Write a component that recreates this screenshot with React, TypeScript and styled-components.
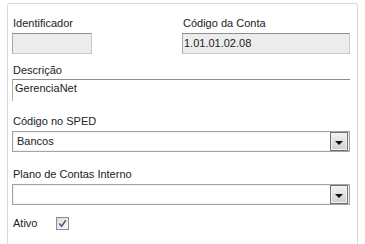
import * as React from 'react';
import styled, { createGlobalStyle } from 'styled-components';

const GlobalStyle = createGlobalStyle`
  body {
    margin: 0;
    background: #ffffff;
    font-family: 'Liberation Sans', Arial, sans-serif;
  }
`;

const App: React.FC = () => {
  return (
    <>
      <GlobalStyle />
      <Panel>
        <TopRow>
          <Field>
            <Label>Identificador</Label>
            <ReadOnlyBox width="80px" />
          </Field>
          <Field>
            <Label>Código da Conta</Label>
            <ReadOnlyBox>1.01.01.02.08</ReadOnlyBox>
          </Field>
        </TopRow>

        <Field spacing={10}>
          <Label>Descrição</Label>
          <TextBox>GerenciaNet</TextBox>
        </Field>

        <Field spacing={14}>
          <Label>Código no SPED</Label>
          <Select>
            <SelectValue>Bancos</SelectValue>
            <DropButton>
              <Arrow />
            </DropButton>
          </Select>
        </Field>

        <Field spacing={16}>
          <Label>Plano de Contas Interno</Label>
          <Select>
            <SelectValue />
            <DropButton>
              <Arrow />
            </DropButton>
          </Select>
        </Field>

        <CheckRow>
          <span>Ativo</span>
          <Check>
            <svg width="9" height="9" viewBox="0 0 9 9">
              <path d="M1.2 4.6 L3.6 7.3 L7.8 1.2" fill="none" stroke="#4a5a8c" strokeWidth="1.5" />
            </svg>
          </Check>
        </CheckRow>
      </Panel>
    </>
  );
};

const Panel = styled.div`
  box-sizing: border-box;
  margin: 3px 0 0 7px;
  width: 351px;
  height: 241px;
  padding: 13px 7px 0 4px;
  border: 1px solid #d9d9d9;
  border-bottom: none;
  border-radius: 3px 3px 0 0;
  background: #ffffff;
  color: #222222;
  font-size: 11px;
`;

const TopRow = styled.div`
  display: grid;
  grid-template-columns: 170px 1fr;
`;

const Field = styled.div<{ spacing?: number }>`
  display: flex;
  flex-direction: column;
  margin-top: ${(p) => p.spacing ?? 0}px;
`;

const Label = styled.div`
  line-height: 13px;
  height: 13px;
  margin-bottom: 3px;
  padding-left: 1px;
`;

const ReadOnlyBox = styled.div<{ width?: string }>`
  box-sizing: border-box;
  width: ${(p) => p.width ?? '100%'};
  height: 21px;
  padding: 3px 1px;
  line-height: 13px;
  background: #ececec;
  border: 1px solid #c9c9c9;
  border-top-color: #8e8e8e;
  border-left-color: #a9a9a9;
`;

const TextBox = styled.div`
  box-sizing: border-box;
  margin-top: -1px;
  height: 22px;
  padding: 2px 2px;
  line-height: 13px;
  border-top: 1px solid #8e8e8e;
  border-left: 1px solid #b0b0b0;
`;

const Select = styled.div`
  box-sizing: border-box;
  display: flex;
  align-items: center;
  height: 21px;
  border: 1px solid #a4a4a4;
  box-shadow: inset 0 0 0 1px #f1f1f1;
  background: #ffffff;
`;

const SelectValue = styled.div`
  flex: 1;
  padding-left: 4px;
  line-height: 13px;
`;

const DropButton = styled.div`
  box-sizing: border-box;
  display: flex;
  align-items: center;
  justify-content: center;
  width: 18px;
  height: 19px;
  margin-right: 1px;
  border: 1px solid #6f6f6f;
  box-shadow: inset 0 0 0 1px #f4f4f4;
  background: linear-gradient(#f3f3f3, #cfcfcf);
`;

const Arrow = styled.span`
  width: 0;
  height: 0;
  margin-top: 2px;
  border-left: 4px solid transparent;
  border-right: 4px solid transparent;
  border-top: 4px solid #111111;
`;

const CheckRow = styled.div`
  display: flex;
  align-items: center;
  gap: 19px;
  margin-top: 12px;
  padding-left: 1px;
  line-height: 13px;
`;

const Check = styled.span`
  box-sizing: border-box;
  display: flex;
  align-items: center;
  justify-content: center;
  width: 13px;
  height: 13px;
  border: 1px solid #8c8c8c;
  background: linear-gradient(135deg, #dcdcdc, #fafafa);
`;

export default App;
